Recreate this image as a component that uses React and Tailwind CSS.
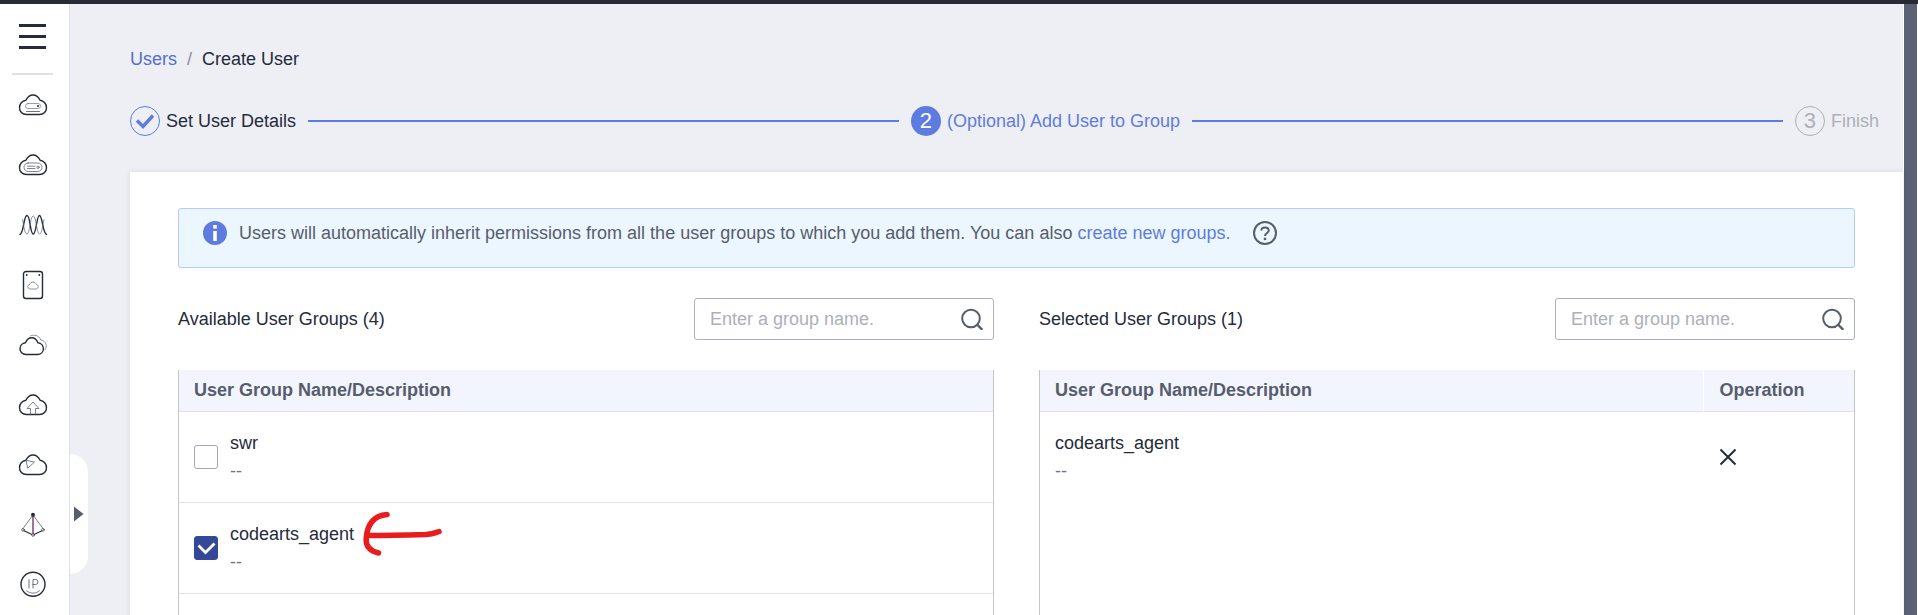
import { useState } from "react";

const CLOUD =
  "M8.500 24.500C4.300 24.500 1.500 21.500 1.500 17.700c0-3.700 2.600-6.900 6.400-7.400C9.500 7 12 5 15 5s5.500 2 7.100 5.300c3.800.5 6.400 3.700 6.400 7.400 0 3.800-2.800 6.800-7 6.800z";

function Icon({ children }) {
  return (
    <svg
      viewBox="0 0 30 30"
      className="size-[30px]"
      fill="none"
      stroke="#252b3a"
      strokeWidth="1.4"
      strokeLinecap="round"
      strokeLinejoin="round"
      aria-hidden="true"
    >
      {children}
    </svg>
  );
}

const services = [
  {
    name: "Elastic Cloud Server",
    icon: (
      <Icon>
        <path d={CLOUD} />
        <rect x="7.500" y="13.500" width="15" height="5" rx="2.500" strokeWidth="0.7" stroke="#777184" />
        <circle cx="20" cy="16" r="1" fill="#252b3a" stroke="none" />
        <path d="M8.500 21.500h13" strokeWidth="0.9" stroke="#5c6173" />
      </Icon>
    ),
  },
  {
    name: "Bare Metal Server",
    icon: (
      <Icon>
        <path d={CLOUD} />
        <rect x="6" y="13" width="18" height="8.500" rx="4.200" strokeWidth="0.8" stroke="#5c6173" />
        <path d="M9.500 16.200h7.500M9.500 18.500h7.500" strokeWidth="0.8" stroke="#5c6173" />
        <circle cx="20" cy="17.300" r="1.200" strokeWidth="0.8" stroke="#5c6173" />
      </Icon>
    ),
  },
  {
    name: "Auto Scaling",
    icon: (
      <Icon>
        <path d="M2 24.500C6 23 5.500 5.500 9 5.500S12 24 15.200 24 18.500 5.500 21.500 5.500 24.500 23 28.500 24.500" />
        <path d="M4.500 9.500C5.800 13 6 24 9 24s3-18 6.200-18S18.500 24 21.500 24s3-11 4.500-14.500" strokeWidth="0.7" stroke="#5c6173" />
      </Icon>
    ),
  },
  {
    name: "Elastic Volume Service",
    icon: (
      <Icon>
        <rect x="5.500" y="1.500" width="19" height="27" rx="2.500" />
        <circle cx="8.700" cy="5" r="0.9" fill="#252b3a" stroke="none" />
        <circle cx="21.300" cy="5" r="0.9" fill="#252b3a" stroke="none" />
        <path d="M12.200 19c-3.200 0-3.200-4.200-.4-4.600.8-3.300 5.600-3.300 6.400 0 2.800.4 2.800 4.600-.4 4.600z" strokeWidth="0.7" stroke="#5c6173" />
      </Icon>
    ),
  },
  {
    name: "Object Storage Service",
    icon: (
      <Icon>
        <path d="M8 24.500C4.400 24.500 2 21.900 2 18.700c0-3.200 2.300-5.700 5.500-6C8.900 9.500 11 7.800 13.700 7.800s4.800 1.700 6.200 4.900c3.200.3 5.500 2.800 5.500 6 0 3.200-2.400 5.800-6 5.800z" />
        <path d="M12.500 5.800C15 4.500 21 4.800 22.800 10c5 .6 7.200 6 4.200 9.800" strokeWidth="0.7" stroke="#5c6173" />
      </Icon>
    ),
  },
  {
    name: "Cloud Backup",
    icon: (
      <Icon>
        <path d={CLOUD} />
        <path d="M12.500 24v-5.500H9L15 12l6 6.500h-3.500V24" strokeWidth="0.8" stroke="#5c6173" />
      </Icon>
    ),
  },
  {
    name: "Virtual Private Cloud",
    icon: (
      <Icon>
        <path d={CLOUD} />
        <path d="M8.500 10.500l8 1.500-6.500 6z" strokeWidth="0.8" stroke="#5c6173" />
      </Icon>
    ),
  },
  {
    name: "Elastic Load Balance",
    icon: (
      <Icon>
        <path d="M15 5L5 18.500M15 5l10 13.500" strokeWidth="0.8" stroke="#5c6173" />
        <path d="M15 5v19" stroke="#6b2a5f" strokeWidth="1.300" />
        <path d="M5.500 20.500L14 24.500M24.500 20.500L16 24.500" strokeWidth="1.200" />
        <circle cx="15" cy="4.700" r="2" fill="#252b3a" stroke="none" />
        <circle cx="5" cy="19.800" r="1.300" fill="#fff" strokeWidth="0.7" />
        <circle cx="25" cy="19.800" r="1.300" fill="#fff" strokeWidth="0.7" />
        <circle cx="15" cy="25" r="1.300" fill="#fff" strokeWidth="0.7" />
      </Icon>
    ),
  },
  {
    name: "Elastic IP",
    icon: (
      <Icon>
        <circle cx="15" cy="14.300" r="12" />
        <path d="M11 9.500v8.500M15 18V9.500h2.500a2.400 2.400 0 0 1 0 5H15" strokeWidth="0.9" stroke="#5c6173" />
        <path d="M8.500 20.800c4 3.200 9 3.200 13 0" strokeWidth="0.8" stroke="#5c6173" />
      </Icon>
    ),
  },
];

function Sidebar() {
  return (
    <nav aria-label="Services" className="flex w-[70px] shrink-0 flex-col border-r border-[#dfe1e6] bg-white pr-1">
      <button type="button" aria-label="Open menu" className="mx-auto mt-5 flex h-[25px] w-[27px] flex-col justify-between">
        <span className="h-[3px] w-full bg-[#252b3a]" />
        <span className="h-[3px] w-full bg-[#252b3a]" />
        <span className="h-[3px] w-full bg-[#252b3a]" />
      </button>
      <hr className="mx-auto mt-6 w-[41px] border-t-2 border-[#dfe1e6]" />
      <ul className="mt-[15px] flex flex-col items-center gap-[30px]">
        {services.map((s) => (
          <li key={s.name}>
            <a href="#" aria-label={s.name} className="block">
              {s.icon}
            </a>
          </li>
        ))}
      </ul>
    </nav>
  );
}

function StepLine() {
  return <span aria-hidden="true" className="mx-3 h-0.5 flex-1 bg-[#5e7ce0]" />;
}

function Stepper() {
  return (
    <ol className="mt-[33px] flex h-[30px] items-center pr-6">
      <li className="flex flex-auto items-center">
        <span className="mr-1.5 flex size-[30px] items-center justify-center rounded-full border border-[#5e7ce0]">
          <svg viewBox="0 0 20 20" className="size-5" fill="none" stroke="#5e7ce0" strokeWidth="3.400" aria-hidden="true">
            <path d="M2 9.500l6 6L18 4.500" />
          </svg>
        </span>
        Set User Details
        <StepLine />
      </li>
      <li aria-current="step" className="flex flex-auto items-center text-[#5e7ce0]">
        <span className="mr-1.5 flex size-[30px] items-center justify-center rounded-full bg-[#5e7ce0] text-[22px] text-white">
          2
        </span>
        (Optional) Add User to Group
        <StepLine />
      </li>
      <li className="flex items-center text-[#adb0b8]">
        <span className="mr-1.5 flex size-[30px] items-center justify-center rounded-full border border-[#adb0b8] text-[22px]">
          3
        </span>
        Finish
      </li>
    </ol>
  );
}

function SearchBox({ id, label, value, onChange }) {
  return (
    <div className="flex h-[42px] w-[300px] items-center rounded-[3px] border border-[#adb0b8] bg-white pr-2.5 pl-[15px]">
      <label htmlFor={id} className="sr-only">
        {label}
      </label>
      <input
        id={id}
        type="text"
        value={value}
        onChange={(e) => onChange(e.target.value)}
        placeholder="Enter a group name."
        className="min-w-0 flex-1 bg-transparent outline-none placeholder:text-[#adb0b8]"
      />
      <button type="button" aria-label="Search">
        <svg viewBox="0 0 22 22" className="size-[22px]" fill="none" stroke="#575d6c" strokeWidth="2" aria-hidden="true">
          <circle cx="10" cy="10.500" r="8.800" />
          <path d="M15.500 16L21.300 21.800" strokeWidth="2.400" />
        </svg>
      </button>
    </div>
  );
}

function CheckBox({ checked, onChange, id }) {
  return (
    <span className="grid size-6 shrink-0">
      <input
        id={id}
        type="checkbox"
        checked={checked}
        onChange={onChange}
        className="col-start-1 row-start-1 size-6 appearance-none rounded-[3px] border border-[#a4a7b1] bg-white checked:border-[#344899] checked:bg-[#344899]"
      />
      {checked && (
        <svg
          viewBox="0 0 24 24"
          className="pointer-events-none col-start-1 row-start-1 size-6"
          fill="none"
          stroke="#fff"
          strokeWidth="2.800"
          aria-hidden="true"
        >
          <path d="M4.500 9.500l7 7L20.500 7.500" />
        </svg>
      )}
    </span>
  );
}

function HandArrow() {
  return (
    <svg
      viewBox="0 0 82 48"
      className="pointer-events-none absolute -top-2.5 left-full ml-2 h-12 w-[82px]"
      fill="none"
      stroke="#e81c1c"
      strokeWidth="5.500"
      strokeLinecap="round"
      strokeLinejoin="round"
      aria-hidden="true"
    >
      <path d="M25 4.500C13 5.500 5.500 13 4.200 28C3.500 36 8 41 16.500 43" />
      <path d="M7 25.500C28 25.500 46 25 64 24.500C71 24 74 22.500 77 21.500" />
    </svg>
  );
}

const groups = [
  { name: "swr", description: "--" },
  { name: "codearts_agent", description: "--", marked: true },
  { name: "admin", description: "--" },
  { name: "power_user", description: "--" },
];

const headCell = "h-[41px] pr-[15px] text-left font-bold text-[#575d6c]";

export default function App() {
  const [selected, setSelected] = useState(["codearts_agent"]);
  const [leftQuery, setLeftQuery] = useState("");
  const [rightQuery, setRightQuery] = useState("");

  const toggle = (name) =>
    setSelected((s) => (s.includes(name) ? s.filter((n) => n !== name) : [...s, name]));

  return (
    <div className="flex h-screen flex-col overflow-hidden bg-[#eeeff5] font-['Liberation_Sans',Arial,sans-serif] text-lg leading-7 text-[#252b3a]">
      <header className="h-1 shrink-0 bg-[#282b33]" />
      <div className="flex min-h-0 flex-1">
        <Sidebar />
        <div className="relative flex min-w-0 flex-1 flex-col pl-[60px]">
          <button
            type="button"
            aria-label="Expand panel"
            className="absolute top-[450px] left-0 flex h-[120px] w-[18px] items-center rounded-r-[18px] bg-white pl-1"
          >
            <svg viewBox="0 0 10 16" className="h-4 w-2.5" fill="#575d6c" aria-hidden="true">
              <path d="M0 0.500L9.500 8L0 15.500z" />
            </svg>
          </button>

          <nav aria-label="Breadcrumb" className="mt-[41px]">
            <ol className="flex gap-2.5">
              <li>
                <a href="#" className="text-[#526ecc]">
                  Users
                </a>
              </li>
              <li aria-hidden="true" className="text-[#8a8e99]">
                /
              </li>
              <li aria-current="page">Create User</li>
            </ol>
          </nav>

          <Stepper />

          <main className="mt-9 flex flex-1 flex-col bg-white px-12 pt-9 shadow-[0_0_5px_rgba(37,43,58,0.1)]">
            <div className="flex h-[60px] shrink-0 items-start rounded-[3px] border border-[#b8c9fb] bg-[#ebf6ff] pt-2.5 pl-6 text-[#575d6c]">
              <svg viewBox="0 0 24 24" className="mt-0.5 mr-3 size-6" aria-hidden="true">
                <circle cx="12" cy="12" r="12" fill="#5e7ce0" />
                <rect x="10.200" y="4" width="3.600" height="3.600" fill="#fff" />
                <rect x="10.200" y="10" width="3.600" height="10" fill="#fff" />
              </svg>
              <p>
                Users will automatically inherit permissions from all the user groups to which you add them. You can also{" "}
                <a href="#" className="text-[#5e7ce0]">
                  create new groups.
                </a>
              </p>
              <button type="button" aria-label="Help" className="mt-0.5 ml-[22px]">
                <svg viewBox="0 0 24 24" className="size-6" fill="none" stroke="#575d6c" strokeWidth="2" aria-hidden="true">
                  <circle cx="12" cy="12" r="11" />
                  <path d="M8.300 9.600C8.300 5.300 15.800 5.300 15.800 9.600C15.800 12 12 12 12 15" />
                  <path d="M12 16.700v2.400" strokeWidth="2.400" />
                </svg>
              </button>
            </div>

            <div className="mt-[30px] grid flex-1 grid-cols-2 gap-[45px]">
              <section className="flex flex-col">
                <div className="flex items-center justify-between">
                  <h2>Available User Groups ({groups.length})</h2>
                  <SearchBox id="find-available" label="Find an available group" value={leftQuery} onChange={setLeftQuery} />
                </div>
                <div className="mt-[30px] flex-1 border-x border-[#c3c5cd]">
                  <table className="w-full border-collapse">
                    <thead className="bg-[#f2f5fe]">
                      <tr className="border-b border-[#dfe1e6]">
                        <th scope="col" className={`${headCell} pl-[15px]`}>
                          User Group Name/Description
                        </th>
                      </tr>
                    </thead>
                    <tbody>
                      {groups
                        .filter((g) => g.name.includes(leftQuery))
                        .map((g) => (
                          <tr key={g.name} className="border-b border-[#dfe1e6]">
                            <td className="h-[91px] px-[15px]">
                              <div className="flex items-center gap-3">
                                <CheckBox
                                  id={`group-${g.name}`}
                                  checked={selected.includes(g.name)}
                                  onChange={() => toggle(g.name)}
                                />
                                <div>
                                  <label htmlFor={`group-${g.name}`} className="relative block w-fit">
                                    {g.name}
                                    {g.marked && <HandArrow />}
                                  </label>
                                  <p className="text-[#71757f]">{g.description}</p>
                                </div>
                              </div>
                            </td>
                          </tr>
                        ))}
                    </tbody>
                  </table>
                </div>
              </section>

              <section className="flex flex-col">
                <div className="flex items-center justify-between">
                  <h2>Selected User Groups ({selected.length})</h2>
                  <SearchBox id="find-selected" label="Find a selected group" value={rightQuery} onChange={setRightQuery} />
                </div>
                <div className="mt-[30px] flex-1 border-x border-[#c3c5cd]">
                  <table className="w-full border-collapse">
                    <thead className="bg-[#f2f5fe]">
                      <tr className="border-b border-[#dfe1e6]">
                        <th scope="col" className={`${headCell} pl-[15px]`}>
                          User Group Name/Description
                        </th>
                        <th scope="col" className={`${headCell} w-[151px] border-l border-white pl-4`}>
                          Operation
                        </th>
                      </tr>
                    </thead>
                    <tbody>
                      {selected
                        .filter((n) => n.includes(rightQuery))
                        .map((n) => (
                          <tr key={n}>
                            <td className="h-[91px] px-[15px]">
                              <p>{n}</p>
                              <p className="text-[#71757f]">--</p>
                            </td>
                            <td className="pr-[15px] pl-4">
                              <button type="button" aria-label={`Remove ${n}`} onClick={() => toggle(n)} className="block">
                                <svg viewBox="0 0 18 18" className="size-[18px]" fill="none" stroke="#252b3a" strokeWidth="2" aria-hidden="true">
                                  <path d="M1.500 1.500L16.500 16.500M16.500 1.500L1.500 16.500" />
                                </svg>
                              </button>
                            </td>
                          </tr>
                        ))}
                    </tbody>
                  </table>
                </div>
              </section>
            </div>
          </main>
        </div>
        <div aria-hidden="true" className="w-[15px] shrink-0 border-x border-white bg-[#5c6173]" />
      </div>
    </div>
  );
}
